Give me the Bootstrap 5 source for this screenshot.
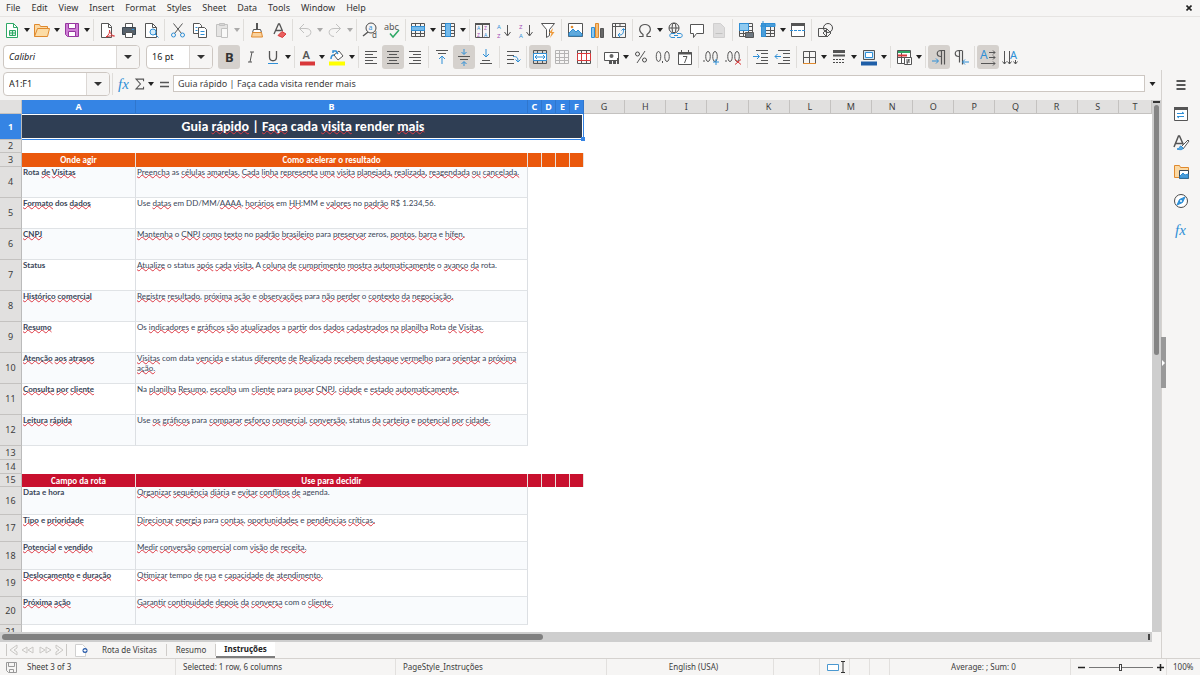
<!DOCTYPE html>
<html lang="pt-BR">
<head>
<meta charset="utf-8">
<meta name="viewport" content="width=device-width, initial-scale=1">
<title>Planilha - Instruções</title>
<link rel="stylesheet" href="https://cdn.jsdelivr.net/npm/bootstrap@5.3.0/dist/css/bootstrap.min.css">
<style>
:root{--chrome:#f6f5f4;--line:#d5d2cf;--ink:#3d3d3d;--sel:#3584e4}
body{background:var(--chrome);color:var(--ink);font:9px/12px "Noto Sans","Open Sans",sans-serif;overflow:hidden}
button,input{font:inherit;color:inherit}
.menu-row{height:17px;gap:11px;padding-left:6px;padding-right:8px;border-bottom:1px solid #e6e4e2;line-height:16px}
.menu-row a{color:#333;text-decoration:none}
.tool-row{height:27px;padding-left:1px;flex-wrap:nowrap}
.tool-row.second{padding-left:3px}
.tb{width:22px;height:24px;padding:0;border:0;background:none;border-radius:3px;display:flex;align-items:center;justify-content:center;flex:none}
.tb.on{background:#d5d1cd}
.tb.off{opacity:.4}
.dd{width:8px;height:24px;padding:0;border:0;background:none;display:flex;align-items:center;justify-content:center;flex:none}
.dd svg{width:6px;height:4px}
.dd.off{opacity:.35}
.gap-a,.gap-b{flex:none;height:22px;width:5px;background:linear-gradient(#dfddda,#dfddda) center/1px 100% no-repeat}
.gap-b{width:4px}
svg.ic{width:18px;height:18px;flex:none;overflow:visible}
.combo{height:24px;border:1px solid #cdc7c2;border-radius:4px;background:#fff;overflow:hidden;flex:none}
.combo input{border:0;outline:0;background:none;padding:0 0 0 5px;min-width:0;flex:1;color:#222}
.combo button{border:0;border-left:1px solid #dcd8d5;background:var(--chrome);width:23px;padding:0}
.combo svg{width:8px;height:4px;display:block;margin:auto}
.size-combo{width:67px;margin:0 5px 0 6px}
.formula-row{height:30px;padding:0 5px 3px 3px}
.formula-row .tb{width:18px}
.formula-row .tb.slim{width:14px}
.formula-row .tb.slim svg{width:16px;height:16px}
.formula-box{height:17px;border:1px solid #cdc7c2;background:#fff;padding:0 4px;margin-right:3px;outline:0;color:var(--ink)}
.sheet-area{background:#fff;overflow:hidden}
.grid{table-layout:fixed;width:100%;border-collapse:separate;border-spacing:0}
.grid th,.grid td{padding:0;overflow:hidden}
.grid thead th{height:14px;line-height:12px;background:#e1e0df;border-right:1px solid #c4c2c0;border-bottom:1px solid #c4c2c0;font-weight:400;text-align:center}
.grid thead th.hot{background:var(--sel);color:#fff;font-weight:700;border-color:#2f76cd}
.grid tbody th{background:#e1e0df;border-right:1px solid #bbb;border-bottom:1px solid #c4c2c0;font-weight:400;text-align:center;vertical-align:middle;line-height:12px}
.grid tbody th.hot{background:var(--sel);color:#fff;font-weight:700}
.grid .key,.grid .val{vertical-align:top;border-right:1px solid #dcdfe3;border-bottom:1px solid #e0e3e6;color:#3a4658}
.grid .key{font:700 8px/10px Lato,Carlito,sans-serif;padding-left:1px}
.grid .val{font:400 8px/10px Lato,Carlito,sans-serif;padding-left:1px}
.grid .tint{background:#f9fbfd}
.grid .band{font:700 9px/12px Carlito,Calibri,Lato,sans-serif;color:#fff;text-align:center;border-right:1px solid #e6e0dc}
.band.orange{background:#ea580c}
.band.red{background:#c8102e}
.grid .headline{position:relative;background:#2f3e54;color:#fff;font:700 14px/20px Carlito,Calibri,Lato,sans-serif;text-align:center;vertical-align:middle;box-shadow:inset -1px -1px var(--sel),inset 0 1px #fff,inset -2px -2px #fff;overflow:visible}
.handle{position:absolute;right:-1px;bottom:-1px;width:4px;height:4px;background:var(--sel)}
.sp{text-decoration:underline wavy 1px #dd3a45;text-decoration-skip-ink:none;text-underline-offset:-1px}
.band .sp{text-decoration-color:#e8402a}
.vbar{width:9px;flex:none;background:#cecece}
.vbar i{display:block;width:5px;margin:0 auto;border-radius:3px;background:#848484}
.vbar b{display:block;height:2px;margin:1px;margin-bottom:2px;background:#333}
.hbar{height:10px;background:#cecece;padding:2px 2px;margin-right:9px}
.hbar i{display:block;height:6px;border-radius:3px;background:#808080}
.hbar b{width:2px;height:6px;background:#444}
.tab-row{height:16px;font-size:8px;line-height:14px}
.tab-row a{color:var(--ink);text-decoration:none;padding:0 9px;border-right:1px solid #cfccc9;line-height:12px}
.tab-row a.now{background:#fff;border:0;border-bottom:2px solid #7d7d7d;font-weight:700;color:#222;padding:0 8px;line-height:14px}
.tab-row button{border:0;background:none;padding:0}
.tab-row .nav-keys{margin-left:6px}
.tab-row .add-sheet{margin:0 5px 0 8px}
.side{width:39px;border-left:1px solid var(--line);padding-top:2px}
.side button{border:0;background:none;padding:0;width:38px;height:25px;display:flex;align-items:center;justify-content:center}
.grip{position:absolute;left:-1px;top:267px;width:5px;height:51px;background:#999;display:flex;align-items:center}
.status{display:grid;grid-template-columns:20px 156fr 220fr 211fr 167fr 46fr 30px 20px 20px 181fr 96px 33px;height:17px;border-top:1px solid var(--line);font-size:8px;line-height:16px}
.status>*{border-right:1px solid #e2e0de;padding-left:7px;white-space:nowrap}
.status>:first-child,.status>:last-child{border:0}
.status>:first-child,.status>:last-child{padding-left:6px}
.status button{border:0;background:none;padding:0;width:9px;height:14px;display:flex;align-items:center}
input.zoom{appearance:none;width:64px;height:9px;background:linear-gradient(#777,#777) center/100% 1px no-repeat;margin:0 4px 0 2px}
input.zoom::-webkit-slider-thumb{appearance:none;width:3px;height:7px;border:1px solid #444;background:#fff}
</style>
<script src="https://cdn.jsdelivr.net/npm/bootstrap@5.3.0/dist/js/bootstrap.bundle.min.js"></script>
</head>
<body class="d-flex flex-column vh-100">
<nav class="menu-row d-flex align-items-center" aria-label="Menu">
<a href="#">File</a><a href="#">Edit</a><a href="#">View</a><a href="#">Insert</a><a href="#">Format</a><a href="#">Styles</a><a href="#">Sheet</a><a href="#">Data</a><a href="#">Tools</a><a href="#">Window</a><a href="#">Help</a>
<button class="ms-auto border-0 bg-transparent p-0" aria-label="Close"><svg width="6" height="6" viewBox="0 0 6 6" class="d-block"><path d="M.5.5l5 5M5.5.5l-5 5" stroke="#222" stroke-width="1.6"/></svg></button>
</nav>
<div class="tool-row d-flex align-items-center" id="standardBar" role="toolbar" aria-label="Standard"></div>
<div class="tool-row second d-flex align-items-center" role="toolbar" aria-label="Formatting">
<div class="combo d-flex" style="width:137px"><input aria-label="Font" value="Calibri" class="fst-italic"><button aria-label="Choose font"><svg viewBox="0 0 8 4"><path d="M0 0h8L4 4z" fill="#333"/></svg></button></div>
<div class="combo size-combo d-flex"><input aria-label="Font size" value="16 pt"><button aria-label="Choose size"><svg viewBox="0 0 8 4"><path d="M0 0h8L4 4z" fill="#333"/></svg></button></div>
<div class="d-flex align-items-center" id="formatBar"></div>
</div>
<div class="d-flex flex-fill" style="min-height:0">
<main class="d-flex flex-column flex-fill" style="min-width:0">
<div class="formula-row d-flex align-items-center">
<div class="combo d-flex" style="width:107px"><input aria-label="Name box" value="A1:F1"><button aria-label="Choose range"><svg viewBox="0 0 8 4"><path d="M0 0h8L4 4z" fill="#333"/></svg></button></div>
<div class="d-flex align-items-center" id="formulaTools"></div>
<input class="formula-box flex-fill" aria-label="Formula" value="Guia rápido | Faça cada visita render mais">
<button class="dd" aria-label="Expand"><svg viewBox="0 0 6 4" style="width:7px"><path d="M0 0h6L3 4z" fill="#222"/></svg></button>
</div>
<div class="d-flex flex-fill" style="min-height:0">
<div class="sheet-area flex-fill"><table class="grid" id="grid"></table></div>
<div class="vbar"><b></b><i style="height:47%"></i></div>
</div>
<div class="hbar d-flex justify-content-between"><i style="width:47.1%"></i><b></b></div>
<div class="tab-row d-flex align-items-center">
<button class="nav-keys" aria-label="Sheet navigation"><svg width="61" height="12" viewBox="0 0 61 12" class="d-block" fill="none" stroke="#cac8c5"><path d="M.5 0v12M11 1L4 6l7 5V8L8 6l3-2zM21 3l-5 3 5 3zM27 3l-5 3 5 3zM34 3l5 3-5 3zM40 3l5 3-5 3zM50 1l7 5-7 5V8l3-2-3-2zM60.500 0v12"/></svg></button>
<button class="add-sheet" aria-label="Add sheet"><svg width="13" height="13" viewBox="0 0 13 13" class="d-block"><path d="M.5.500h7l3 3v9h-10z" fill="#fff" stroke="#d0d0d0"/><circle cx="10" cy="6.500" r="2.500" fill="#2a5caa"/><path d="M8.500 6.500h3M10 5v3" stroke="#fff"/></svg></button>
<a href="#">Rota de Visitas</a><a href="#">Resumo</a><a href="#" class="now">Instruções</a>
</div>
</main>
<aside class="side position-relative flex-shrink-0" id="side" aria-label="Sidebar"><div class="grip"><svg width="5" height="6" viewBox="0 0 5 6"><path d="M1 0l3 3-3 3z" fill="#fff"/></svg></div></aside>
</div>
<footer class="status">
<div><svg width="11" height="11" viewBox="0 0 11 11" fill="none" stroke="#999"><path d="M.5.500h10v10h-8l-2-2zM2.500.500v4h6v-4M3.500 10.500v-3h4v3"/></svg></div>
<div>Sheet 3 of 3</div><div>Selected: 1 row, 6 columns</div><div>PageStyle_Instruções</div><div class="text-center">English (USA)</div><div></div>
<div class="d-flex align-items-center"><svg width="20" height="12" viewBox="0 0 20 12" fill="none"><path d="M.5 3.500h11v6H.5z" stroke="#4a98d0" fill="#fff"/><path d="M14 .5h4M14 11.500h4M16 .5v11" stroke="#333"/></svg></div>
<div></div><div></div><div class="text-center">Average: ; Sum: 0</div>
<div class="d-flex align-items-center"><button aria-label="Zoom out"><svg width="7" height="7" viewBox="0 0 7 7"><path d="M0 3.500h7" stroke="#222" stroke-width="1.500"/></svg></button><input class="zoom" type="range" min="0" max="100" value="49" aria-label="Zoom"><button aria-label="Zoom in"><svg width="7" height="7" viewBox="0 0 7 7"><path d="M0 3.500h7M3.500 0v7" stroke="#222" stroke-width="1.500"/></svg></button></div>
<div>100%</div>
</footer>
<script>
const K='#555',B='#2f8fd6',P='#a24bb5',O='#e08a2e',R='#d9383a',G='#2fa866';
const p=(d,s=K,f='none',w=1)=>`<path d="${d}" stroke="${s}" fill="${f}" stroke-width="${w}"/>`;
const t=(x,y,s,c,txt,extra='')=>`<text x="${x}" y="${y}" font-size="${s}" fill="${c}" ${extra}>${txt}</text>`;
const cells=p('M2.5 2.500h13v13h-13zM2.500 5.500h13M2.500 9.500h13M2.500 12.500h13M6.500 2.500v13M11.500 2.500v13');
const aligned=(a,b,c)=>p(`M${a} 3.500h${c}M${b} 6.500h8M${a} 9.500h${c}M${b} 12.500h8M${a} 15.500h${c}`);
const icon={
new:p('M3.500 2.500h7l4 4v10h-11z',G,'#fff')+p('M10.500 2.500v4h4',G)+p('M6.500 9.500h6v5h-6zM6.500 12h6M9.500 9.500v5',G,'#d5f0df'),
open:p('M1.500 15.500v-12h5l1 2h7v3',O,'#fbd9a4')+p('M1.500 15.500l3-8h12l-2 8z',O,'#fcdca6'),
save:p('M2.500 2.500h13v13h-11l-2-2z','#96369f','#cf7fd6')+p('M5.500 2.500h7v5h-7z','#96369f','#fff')+p('M5.500 15.500v-5h7v5z','#96369f','#fff'),
pdf:p('M3.500 2.500h7l3 3v11h-10z',K,'#fff')+p('M10.500 2.500v4h3')+p('M8 16c3-2 4-5 3.500-7 0 3 3 6 5 6-3-.5-6 0-8.500 1z',R),
print:p('M5.500 2.500h7v4h-7z',K,'#fff')+p('M2.500 6.500h13v7h-13z','#3b4650','#56616b')+p('M5.500 11.500h7v5h-7z',K,'#fff')+p('M12 8.500h2',B),
preview:p('M3.500 2.500h7l4 4v10h-11z',K,'#fff')+p('M10.500 2.500v4h4')+'<circle cx="11" cy="11" r="3" stroke="#2f8fd6" fill="#d5ecfa"/>'+p('M13 13l3.500 3.500',B),
cut:p('M4.500 2.500l8 10M13.500 2.500l-8 10')+'<circle cx="4.500" cy="14" r="2" fill="none" stroke="#2f8fd6"/><circle cx="13.500" cy="14" r="2" fill="none" stroke="#2f8fd6"/>',
copy:p('M2.500 2.500h6l2 2v8h-8z',K,'#fff')+p('M7.500 6.500h6l2 2v8h-8z',K,'#fff')+p('M9.500 10.500h4M9.500 13.500h4M4.500 6.500h2M4.500 9.500h2',B),
paste:p('M3.500 3.500h11v12h-11z','#777','#ccc')+p('M6.500 2.500h5v2h-5z','#777','#aaa')+p('M8.500 7.500h6v9h-6z','#777','#fff'),
clone:p('M8.500 2v6M9.500 2v6')+p('M5.500 8.500h7l1 3h-9z',K,'#fff')+p('M4.500 11.500h9l1 4.500h-11z',O,'#fad29d'),
clear:p('M4 13L8.500 3h1l3 7M5.500 9.500h6',K,'none',1.3)+p('M8 14.500l4-4 4 2.500-3.500 3.500z',R,'#e9605f'),
undo:p('M8 3L3.500 7.500 8 12M3.500 7.500H10c7 0 6 8 0 8','#777'),
redo:p('M10 3l4.500 4.500L10 12M14.500 7.500H8c-7 0-6 8 0 8','#777'),
find:'<circle cx="10" cy="7" r="5" fill="none" stroke="#4a4a4a"/>'+p('M7 11l-5 4',K,'none',1.5)+t(7.500,9,7,B,'a')+t(11,17,8,K,'d'),
spell:t(1,9,9,K,'abc')+p('M7 12.500l3 3.500 6-7',G,'none',1.5),
rows:cells+p('M2.500 5.500h13v4h-13z',B,'#74baeb'),
cols:cells+p('M6.500 2.500h5v13h-5z',B,'#74baeb'),
sort:p('M2.500 2.500h14v14h-14zM9.500 2.500v14')+p('M2 3h15',K,'none',2)+t(4,9,5,B,'A')+t(4,16,5,P,'Z')+t(11,9,5,P,'Z')+t(11,16,5,B,'A'),
asc:t(2,8,6,B,'A')+t(2,17,6,P,'Z')+p('M12.500 4v10M9.500 11l3 4 3-4'),
desc:t(2,8,6,P,'Z')+t(2,17,6,B,'A')+p('M12.500 4v10M9.500 11l3 4 3-4'),
filter:p('M2.500 2.500h13l-5 6v6l-3 2v-8z',K,'#fff')+p('M14 7l-4 5h2.500L11 17l4.500-6H13z','none','#ee9b3d'),
image:p('M2.500 2.500h14v13h-14z',K,'#fff')+p('M3 15v-3l4-4 3 3 2-2 4 4v2z',B,'#5fa9dc')+'<circle cx="6" cy="6" r="1.300" fill="#e08a2e"/>',
chart:p('M3.500 6.500h3v10h-3z',B,'#8ec8ef')+p('M7.500 2.500h3v14h-3z',O,'#f6bf78')+p('M12.500 7.500h3v9h-3z',K,'#686868'),
pivot:p('M2.500 2.500h13v14h-13zM2.500 5.500h13M5.500 2.500v14M10 2.500v3')+p('M8.500 14h1c4 0 4-3 4-6M11.500 9.500l2-2 2 2M10 12l-2 2 2 2',B),
omega:p('M3 15.500h4v-2C1 9 4 3.500 9 3.500s8 5.500 2 10v2h4',K,'none',1.200),
link:'<circle cx="8" cy="7" r="5" fill="none" stroke="#4a4a4a"/><ellipse cx="8" cy="7" rx="2" ry="5" fill="none" stroke="#4a4a4a"/>'+p('M3 7h10')+p('M9 12.500H6c-3 0-3 4 0 4h3M11 12.500h3c3 0 3 4 0 4h-3M8 14.500h4',B),
note:p('M2.500 3.500h13v9h-7l-3 4v-4h-3z',K,'#fff'),
header:p('M3.500 2.500h7l4 4v10h-11z','#999','#bbb')+p('M5.500 12.500h7','#777'),
area:cells+p('M2.500 2.500h9v7h-9z',B,'#8fcaf0')+p('M8.500 11.500h8v5h-8z',K,'#6d7780'),
freeze:cells+p('M2.500 2.500h4v13h-4zM6 2.500h10v3H6z',B,'#4b9ed9')+p('M1 5h6M4 0v6',B),
split:p('M2.500 2.500h13v13h-13z',K,'#fff')+p('M2 3.500h14',K,'none',3)+'<path d="M1 9.500h16" stroke="#2f8fd6" stroke-dasharray="3 1"/>',
shapes:p('M2.500 7.500h8v8h-8z')+'<circle cx="12" cy="7" r="4.500" fill="none" stroke="#4a4a4a"/>'+p('M7 12l4-4 4 4-4 4z'),
bold:t(5,13.500,13,'#333','B','font-weight="700"'),
italic:p('M8 4h4M6 14h4M10 4L8 14'),
underline:p('M5.500 3v6c0 5 7 5 7 0V3',K,'none',1.300)+p('M4 15.500h10',B),
fontcolor:t(4.500,11,11,K,'A','font-weight="600"')+p('M2 15.500h15',R,'none',4),
fill:p('M6 7l5-4 4 5-5 4z',K,'#fff')+p('M5 5v-2h3l2 3M3 11c0-3 1-4 3-4',B,'none',1.500)+p('M1 15.500h16','#ffff00','none',4),
left:p('M3 3.500h12M3 6.500h8M3 9.500h12M3 12.500h8M3 15.500h12'),
center:p('M3 3.500h12M5 6.500h8M3 9.500h12M5 12.500h8M3 15.500h12'),
right:p('M3 3.500h12M7 6.500h8M3 9.500h12M7 12.500h8M3 15.500h12'),
top:p('M3 2.500h12M5 5.500h8')+p('M9 16V8M6 11l3-3 3 3',B),
middle:p('M3 8.500h12M5 11.500h8')+p('M9 1v5M6.500 4L9 6.500 11.500 4M9 18v-4M6.500 16L9 13.500l2.500 2.500',B),
bottom:p('M3 15.500h12M5 12.500h8')+p('M9 1v8M6 6l3 3 3-3',B),
wrap:p('M3 3.500h12M3 7.500h7M3 11.500h7M3 15.500h7')+p('M9 8.500c4 0 5 1 5 5M11.500 11.500l2.500 2.500 2.500-2.500',B),
merge:cells+p('M2.500 5.500h13v7h-13z',B,'#fff')+p('M4 9h10M6 7L4 9l2 2M12 7l2 2-2 2',B),
join:cells,
splitc:p('M2.500 2.500h13v13h-13zM6.500 2.500v13M11.500 2.500v13')+p('M2.500 5.500h13v7h-13zM6.500 5.500v7M11.500 5.500v7',R,'#fff'),
money:p('M2.500 4.500h14v8h-14z',K,'#fff')+'<circle cx="9.500" cy="8" r="2" fill="#666"/>'+p('M11 12h3v4h-3zM15 10h2v6h-2zM7 13h3v3H7z','none','#555'),
percent:'<circle cx="5.500" cy="6" r="2" fill="none" stroke="#4a4a4a"/><circle cx="12.500" cy="12" r="2" fill="none" stroke="#4a4a4a"/>'+p('M13 3L5 15'),
number:p('M4.500 3.500c3 0 3 10 0 10s-3-10 0-10zM13 3.500c3 0 3 10 0 10s-3-10 0-10zM8.500 13v2'),
date:p('M2.500 4.500h13v12h-13z',K,'#fff')+p('M2 5.500h14',K,'none',2)+p('M5.500 2v3M12.500 2v3M7 8.500h4L8.500 15'),
decadd:p('M1 12v2M5 3.500c3 0 3 10 0 10s-3-10 0-10zM12 3.500c3 0 3 10 0 10s-3-10 0-10z')+p('M10 14h6M13 11v6',B),
decdel:p('M1 12v2M5 3.500c3 0 3 10 0 10s-3-10 0-10zM12 3.500c3 0 3 10 0 10s-3-10 0-10z')+p('M10 11.500l6 5M16 11.500l-6 5',R),
indent:p('M4 2.500h12M9 5.500h7M9 9.500h7M9 12.500h7M4 15.500h12')+p('M1 8.500h6M5 6l2.500 2.500L5 11',B),
outdent:p('M4 2.500h12M9 5.500h7M9 9.500h7M9 12.500h7M4 15.500h12')+p('M1 8.500h6M3.500 6L1 8.500 3.500 11',B),
borders:p('M3.500 3.500h12v12h-12zM9.500 3.500v12M3.500 9.500h12')+p('M3 15.500h13',O),
bstyle:p('M3 3.500h12',K,'none',3)+p('M3 7.500h12',K,'none',2)+'<path d="M3 11.500h12M3 14.500h12" stroke="#4a4a4a" stroke-dasharray="2 1"/>',
bcolor:p('M3.500 2.500h11v9h-11z',K,'#cfe6f7')+p('M5.500 4.500h7v5h-7z',B,'#fff')+p('M1 15.500h16','#1f5fa8','none',4),
cond:p('M2.500 2.500h13v13h-13zM2.500 9.500h13M6.500 2.500v13',K,'#fff')+p('M3 4h12',G,'none',2)+p('M3 7.500h9',R,'none',2)+p('M9.500 9.500h7v7h-7z',K,'#fff')+p('M11 12h4M11 14h4M14 11l-2 5'),
ltr:p('M15 2.500h-4c-5 0-5 6 0 6M11.500 2.500v14M14.500 2.500v14',K,'none',1.200)+p('M2 13h6M6 10.500l2.500 2.500L6 15.500',B),
rtl:p('M10 2.500H7c-5 0-5 6 0 6M7.500 2.500v12M10.500 2.500v14',K,'none',1.200)+p('M17 14h-6M13 11.500l-2.500 2.500 2.500 2.500',B),
horiz:t(1,11,12,B,'A')+p('M10 4.500h6M10 9.500h6M2 15.500h14M14 2.500l2 2-2 2M14 7.500l2 2-2 2M14 13.500l2 2-2 2'),
vert:t(9,11,11,B,'A')+p('M3.500 3v13M8.500 3v13M14.500 12v4M1.500 13.500l2 2.500 2-2.500M6.500 13.500l2 2.500 2-2.500M12.500 13.500l2 2.500 2-2.500'),
fx:`<text x="3" y="14" font-size="15" fill="${B}" font-family="Liberation Serif,serif" font-style="italic">fx</text>`,
sum:p('M13 6V3.500H4.500L9.500 9l-5 5.500H13V12',K,'none',1.200),
equals:p('M5 7.500h9M5 11.500h9',K,'none',1.500),
burger:p('M4.500 5h9M4.500 9h9M4.500 13h9','#222','none',1.500),
props:p('M2.500 2.500h13v13h-13z',K,'#fff')+p('M2 3.500h14',K,'none',3)+p('M5 8.500h7M10 7l2 1.500M12 11.500H5M7 13l-2-1.500',B),
styles:p('M2 13L6.500 2h1l4 9M4 9.500h7',K,'none',1.500)+p('M9 13l7-7 1 1-6 8z',K,'#fff')+p('M5 15c3 1 6 1 6-1l-2-2c-2 0-1 3-4 3z',B,'#5ba9df'),
gallery:p('M2.500 14.500v-12h5l1 2h8v10z',O,'#fbd9a4')+p('M7.500 7.500h9v8h-9z','#3b4a58','#fff')+p('M8 15v-2l3-3 2 2 3-1v4z',B,'#4a9bd6'),
compass:'<circle cx="9" cy="9" r="6.500" fill="#fff" stroke="#4a4a4a"/>'+p('M13 5l-2.500 5.500L5 13l2.500-5.500z',B,'#2f8fd6')+'<circle cx="9" cy="9" r="1" fill="#fff"/>'
};
const svg=n=>`<svg class="ic" viewBox="0 0 18 18">${icon[n]}</svg>`;
const bar=s=>s.split(' ').map(k=>{
 if(k==='|')return '<span class="gap-a"></span>';
 if(k===':')return '<span class="gap-b"></span>';
 const off=k.includes('-')?' off':'',on=k.includes('+')?' on':'',n=k.replace(/[-+]/g,'');
 if(n==='v')return `<button class="dd${off}" aria-label="More"><svg viewBox="0 0 6 4"><path d="M0 0h6L3 4z" fill="#222"/></svg></button>`;
 return `<button class="tb${on}${off}${n==='sum'?' slim':''}" aria-label="${n}">${svg(n)}</button>`;
}).join('');
standardBar.innerHTML=bar('new v open v save v | pdf print preview | cut copy paste- v- | clone clear : undo- v- redo- v- | find spell : rows v cols v : sort asc desc filter | image chart pivot : omega v link note header- | area freeze v split | shapes');
formatBar.innerHTML=bar('bold+ italic underline v : fontcolor v fill v : left center+ right | top middle+ bottom | wrap | merge+ join- splitc | money v percent number date | decadd decdel | indent outdent : borders v bstyle v bcolor v | cond v | ltr+ rtl | horiz+ vert');
formulaTools.innerHTML=bar('| fx sum v equals');
side.insertAdjacentHTML('beforeend',['burger','props','styles','gallery','compass','fx'].map(n=>`<button aria-label="${n}" class="mb-1">${svg(n)}</button>`).join(''));

/* Words in [brackets] are flagged by the spell checker. */
const mark=s=>s.replace(/\[(.+?)\]/g,'<span class="sp">$1</span>');
const rows=[
['headline',26,'Guia [rápido] | [Faça] cada [visita] render [mais]'],
['blank',13],
['orange',14,'Onde [agir]','Como [acelerar] o [resultado]'],
['row',31,'Rota [de] [Visitas]','[Preencha] as [células] [amarelas.] [Cada] [linha] [representa] [uma] [visita] [planejada,] [realizada,] [reagendada] [ou] [cancelada.]'],
['row',31,'[Formato] dos [dados]','Use [datas] em DD/MM/[AAAA], [horários] em [HH]:MM e [valores] no [padrão] R$ 1.234,56.'],
['row',31,'[CNPJ]','[Mantenha] o [CNPJ] [como] [texto] no [padrão] [brasileiro] para [preservar] zeros, [pontos], [barra] e [hífen.]'],
['row',31,'Status','[Atualize] o status [após] [cada] [visita.] A [coluna] [de] [cumprimento] [mostra] [automaticamente] o [avanço] [da] rota.'],
['row',31,'[Histórico] [comercial]','[Registre] [resultado], [próxima] [ação] e [observações] para [não] [perder] o [contexto] [da] [negociação.]'],
['row',31,'[Resumo]','Os [indicadores] e [gráficos] [são] [atualizados] a [partir] dos [dados] [cadastrados] [na] [planilha] Rota [de] [Visitas.]'],
['row',31,'[Atenção] [aos] [atrasos]','[Visitas] com data [vencida] e status [diferente] [de] [Realizada] [recebem] [destaque] [vermelho] para [orientar] a [próxima] [ação.]'],
['row',31,'[Consulta] [por] [cliente]','Na [planilha] [Resumo], [escolha] um [cliente] para [puxar] [CNPJ], [cidade] e [estado] [automaticamente.]'],
['row',31,'[Leitura] [rápida]','Use [os] [gráficos] para [comparar] [esforço] [comercial], [conversão], status [da] [carteira] e [potencial] [por] [cidade.]'],
['blank',14],['blank',14],
['red',13,'Campo da rota','Use para decidir'],
['row',28,'Data e hora','[Organizar] [sequência] [diária] e [evitar] [conflitos] [de] agenda.'],
['row',27,'[Tipo] e [prioridade]','[Direcionar] [energia] para [contas], [oportunidades] e [pendências] [críticas.]'],
['row',28,'[Potencial] e [vendido]','[Medir] [conversão] [comercial] com [visão] [de] [receita.]'],
['row',27,'[Deslocamento] e [duração]','[Otimizar] tempo [de] [rua] e [capacidade] [de] [atendimento.]'],
['row',28,'[Próxima] [ação]','[Garantir] [continuidade] [depois] [da] [conversa] com o [cliente.]'],
['blank',14]];
const widths=[22,114,392,14,14,14,14];
const letters='ABCDEFGHIJKLMNOPQRST';
grid.innerHTML='<colgroup>'+widths.map(w=>`<col style="width:${w}px">`).join('')+'<col>'.repeat(13)+'<col style="width:33px"></colgroup><thead><tr><th></th>'
+[...letters].map((c,i)=>`<th class="${i<6?'hot':''}">${c}</th>`).join('')+'</tr></thead><tbody>'
+rows.map(([kind,h,a,b],i)=>{
 const head=`<tr style="height:${h}px"><th class="${i?'':'hot'}">${i+1}</th>`;
 if(kind==='headline')return head+`<td colspan="6" class="headline">${mark(a)}<span class="handle"></span></td><td colspan="14"></td></tr>`;
 if(kind==='blank')return head+'<td colspan="20"></td></tr>';
 if(kind==='row'){const c=i%2?' tint':'';return head+`<td class="key${c}">${mark(a)}</td><td class="val${c}">${mark(b)}</td><td colspan="18"></td></tr>`}
 const td=x=>`<td class="band ${kind}">${x}</td>`;
 return head+td(mark(a))+td(mark(b))+td('').repeat(4)+'<td colspan="14"></td></tr>';
}).join('')+'</tbody>';
</script>
</body>
</html>
